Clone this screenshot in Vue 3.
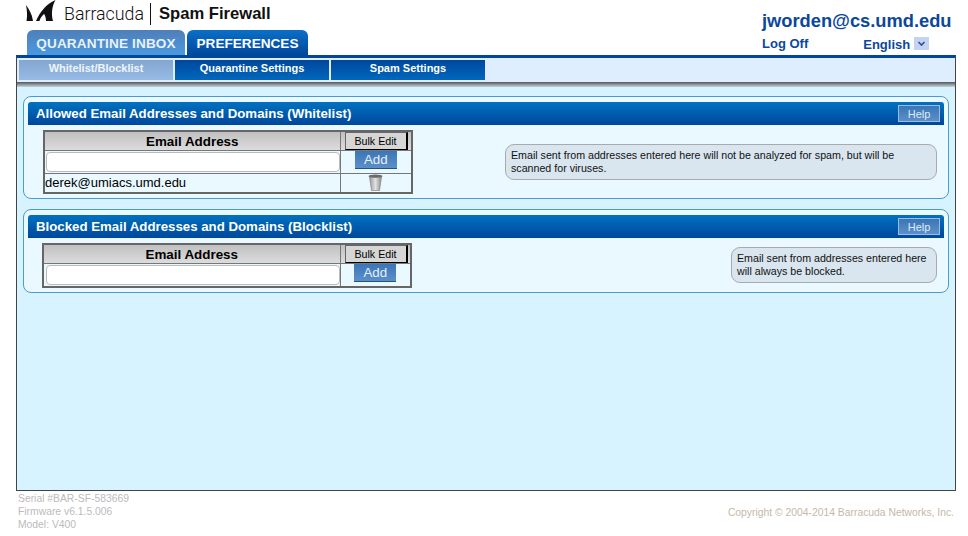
<script setup>
const sections = [
  { title: 'Allowed Email Addresses and Domains (Whitelist)', rows: ['derek@umiacs.umd.edu'], note: 'Email sent from addresses entered here will not be analyzed for spam, but will be scanned for viruses.', wide: true },
  { title: 'Blocked Email Addresses and Domains (Blocklist)', rows: [], note: 'Email sent from addresses entered here will always be blocked.', wide: false },
]
</script>

<template>
  <div class="page">
    <header class="top">
      <div class="brand">
        <div class="logo">
          <svg class="shark" width="30" height="22" viewBox="0 0 30 22">
            <path d="M0 5 C3 9 6 14 7 21 L0.5 21 C1.5 16 1 10 0 5Z" fill="#111" />
            <path d="M10 21 C14 12 20 4 29.5 0 C26 6 25 14 27 21 L20 21 C20 18 19 15 18 14 C16 16 14 18 13.5 21Z" fill="#111" />
          </svg>
          <span class="b-name">Barracuda</span>
          <span class="b-div"></span>
          <span class="b-prod">Spam Firewall</span>
        </div>
        <nav class="tabs">
          <a class="tab off">QUARANTINE INBOX</a>
          <a class="tab on">PREFERENCES</a>
        </nav>
      </div>
      <div class="user">
        <div class="email">jworden@cs.umd.edu</div>
        <div class="links">
          <a class="logoff">Log Off</a>
          <span class="lang">English
            <span class="drop">
              <svg width="9" height="6" viewBox="0 0 9 6"><path d="M1.5 1 L4.5 4 L7.5 1" fill="none" stroke="#33508f" stroke-width="1.6" /></svg>
            </span>
          </span>
        </div>
      </div>
    </header>

    <main class="panel">
      <div class="subnav">
        <a class="sub cur">Whitelist/Blocklist</a>
        <a class="sub">Quarantine Settings</a>
        <a class="sub">Spam Settings</a>
      </div>
      <div class="shadow"></div>
      <div class="content">
        <section v-for="s in sections" :key="s.title" class="box">
          <div class="bar">
            <h2>{{ s.title }}</h2>
            <button class="help">Help</button>
          </div>
          <div class="body" :class="{ narrow: !s.wide }">
            <table class="grid">
              <tbody>
                <tr class="head">
                  <th class="c1">Email Address</th>
                  <th class="c2"><button class="bulk">Bulk Edit</button></th>
                </tr>
                <tr class="entry">
                  <td class="c1"><span class="input"></span></td>
                  <td class="c2"><button class="add">Add</button></td>
                </tr>
                <tr v-for="r in s.rows" :key="r" class="row">
                  <td class="c1">{{ r }}</td>
                  <td class="c2">
                    <svg width="15" height="17" viewBox="0 0 15 17">
                      <defs>
                        <linearGradient id="can" x1="0" x2="1" y1="0" y2="0">
                          <stop offset="0" stop-color="#9a9a9a" />
                          <stop offset=".5" stop-color="#e2e2e2" />
                          <stop offset="1" stop-color="#8a8a8a" />
                        </linearGradient>
                      </defs>
                      <path d="M1.5 3 L13.5 3 L11.5 16.5 L3.5 16.5Z" fill="url(#can)" stroke="#888" stroke-width=".7" />
                      <ellipse cx="7.5" cy="2.2" rx="7" ry="1.6" fill="#6a6a6a" />
                    </svg>
                  </td>
                </tr>
              </tbody>
            </table>
            <p class="note" :class="{ small: !s.wide }">{{ s.note }}</p>
          </div>
        </section>
      </div>
    </main>

    <footer class="foot">
      <div class="meta">
        <div>Serial #BAR-SF-583669</div>
        <div>Firmware v6.1.5.006</div>
        <div>Model: V400</div>
      </div>
      <div class="copy">Copyright © 2004-2014 Barracuda Networks, Inc.</div>
    </footer>
  </div>
</template>

<style>
html, body { margin: 0; background: #fff; }
</style>

<style scoped>
.page {
  width: 968px;
  height: 536px;
  overflow: hidden;
  font-family: "Liberation Sans", Arial, sans-serif;
  color: #000;
}
.top {
  height: 55px;
  display: flex;
  justify-content: space-between;
  padding: 0 17px 0 26px;
}
.logo {
  height: 30px;
  display: flex;
  align-items: flex-start;
}
.shark { display: block; flex: none; }
.b-name {
  margin: 3px 0 0 8px;
  font-family: Roboto, "Liberation Sans", sans-serif;
  font-weight: 300;
  font-size: 17.8px;
  line-height: 22px;
  color: #111;
  width: 78px;
  white-space: nowrap;
}
.b-div {
  width: 1px;
  height: 22px;
  margin: 3px 8px 0 8px;
  background: #111;
}
.b-prod {
  margin-top: 3px;
  font-size: 16.6px;
  line-height: 22px;
  font-weight: 700;
  color: #111;
  white-space: nowrap;
}
.tabs { display: flex; gap: 2px; padding-left: 1px; }
.tab {
  height: 25px;
  line-height: 27px;
  text-align: center;
  color: #fff;
  font-weight: 700;
  font-size: 13.6px;
  border-radius: 6px 6px 0 0;
}
.tab.off {
  width: 158px;
  background: linear-gradient(#4f7fb8, #4b99e0);
  color: #e8f2fb;
  letter-spacing: .13px;
}
.tab.on {
  width: 121px;
  background: linear-gradient(#0a70c6, #00479c);
}
.user { width: 189px; }
.email {
  margin-top: 10px;
  font-size: 18.3px;
  line-height: 21px;
  font-weight: 700;
  color: #0b479c;
  white-space: nowrap;
}
.links {
  display: flex;
  margin-top: 5px;
  font-size: 13px;
  line-height: 15px;
  font-weight: 700;
  color: #0b479c;
}
.lang {
  margin-left: 55px;
  margin-top: 1px;
  display: flex;
  align-items: center;
  gap: 4px;
  white-space: nowrap;
}
.drop {
  width: 15px;
  height: 13px;
  margin-top: -2px;
  background: #c4d3f2;
  display: flex;
  align-items: center;
  justify-content: center;
}
.panel {
  margin-left: 16px;
  width: 940px;
  height: 436px;
  box-sizing: border-box;
  border-top: 3px solid #00479c;
  border-left: 1px solid #444;
  border-right: 1px solid #444;
  border-bottom: 1px solid #444;
  background: #d6f3ff;
}
.subnav {
  height: 24px;
  box-sizing: border-box;
  padding: 2px 0 0 2px;
  display: flex;
  gap: 2px;
  background: #deeeff;
}
.sub {
  width: 154px;
  height: 20px;
  line-height: 17px;
  text-align: center;
  font-size: 11px;
  font-weight: 700;
  color: #fff;
  background: linear-gradient(#00479c, #0068bc);
}
.sub.cur {
  background: linear-gradient(#84a6cf, #96bbe6);
  color: #eef5fd;
}
.shadow {
  height: 5px;
  background: linear-gradient(#555, #c3d5dc);
}
.content {
  padding: 9px 6px 0;
  display: flex;
  flex-direction: column;
  gap: 10px;
}
.box {
  box-sizing: border-box;
  border: 1px solid #4a9bd0;
  border-radius: 8px;
  background: #eaf8ff;
  padding: 5px 4px 4px;
}
.bar {
  height: 23px;
  box-sizing: border-box;
  display: flex;
  align-items: center;
  justify-content: space-between;
  padding: 0 4px 0 8px;
  border-radius: 3px 3px 0 0;
  background: linear-gradient(#0072c0, #00479c);
}
.bar h2 {
  margin: 0;
  font-size: 13.25px;
  font-weight: 700;
  color: #fff;
}
.help {
  width: 42px;
  height: 17px;
  padding: 0;
  box-sizing: border-box;
  border: 1px solid #9bbcdf;
  background: linear-gradient(#3a76b8, #5c8fc8);
  color: #dfeaf5;
  font: 11px "Liberation Sans", Arial, sans-serif;
}
.body {
  display: flex;
  justify-content: space-between;
  align-items: center;
  padding: 5px 7px 0 15px;
}
.body.narrow { padding-left: 14px; }
.grid {
  border-collapse: collapse;
  border: 2px solid #666;
  width: 370px;
  table-layout: fixed;
  flex: none;
}
.grid td, .grid th { padding: 0; border: 1px solid #777; box-sizing: border-box; }
.grid .c2 { width: 72px; text-align: center; }
.narrow .grid .c2 { width: 71px; }
.head th {
  height: 18px;
  background: linear-gradient(#c0c0c0, #dcdcdc);
  font-size: 13.4px;
  font-weight: 700;
}
.head .c2 { padding-left: 4px; }
.bulk {
  display: block;
  width: 63px;
  height: 18px;
  padding: 0;
  box-sizing: border-box;
  border: 1px solid #666;
  border-right: 2px solid #000;
  border-bottom: 1px solid #000;
  background: #d6d6d6;
  font: 10.67px "Liberation Sans", Arial, sans-serif;
  color: #000;
}
.entry td { height: 23px; vertical-align: top; }
.narrow .entry td { height: 23px; }
.input {
  display: block;
  margin: 1px 0 0 1px;
  height: 18px;
  background: #fff;
  border: 1px solid #bbb;
  border-radius: 4px;
}
.narrow .input { margin-left: 2px; }
.add {
  display: block;
  margin: 0 auto;
  width: 42px;
  height: 18px;
  padding: 0;
  border: 0;
  border-bottom: 1px solid #26527f;
  background: linear-gradient(#3a76b8, #5c8fc8);
  color: #e8f0f8;
  font: 13.33px "Liberation Sans", Arial, sans-serif;
}
.row td { height: 19px; font-size: 13px; overflow: hidden; padding-bottom: 1px; }
.row svg { display: block; margin: 0 auto; }
.note {
  box-sizing: border-box;
  margin: 0;
  width: 432px;
  padding: 4px 5px;
  border: 1px solid #aaa;
  border-radius: 9px;
  background: #d9e5ef;
  font-size: 10.67px;
  line-height: 13px;
  color: #111;
}
.note.small { width: 206px; }
.foot {
  display: flex;
  justify-content: space-between;
  align-items: center;
  padding: 1px 14px 0 18px;
  font-size: 10.35px;
  line-height: 13px;
  color: #bbb;
}
.copy { color: #c5b8a8; margin-top: 1px; }
</style>
